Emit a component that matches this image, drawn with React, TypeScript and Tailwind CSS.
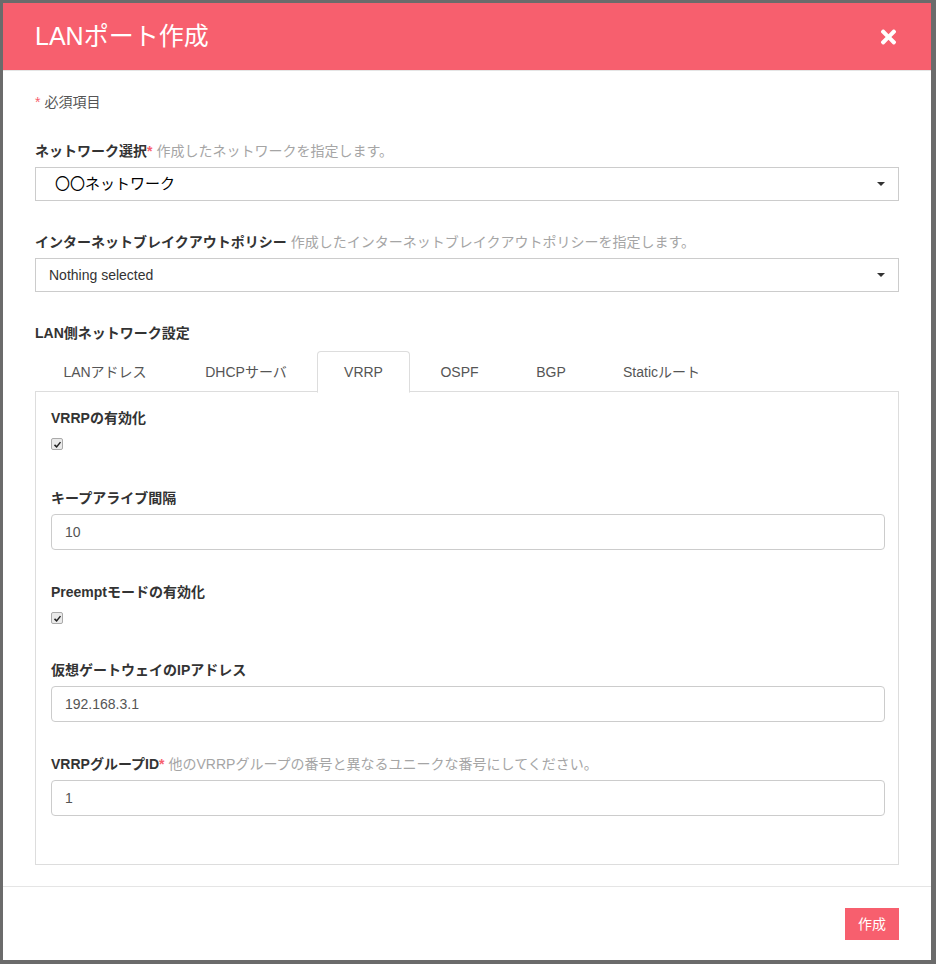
import React from 'react';
import { FaTimes } from 'react-icons/fa';

const FONT = "font-['Liberation_Sans','Noto_Sans_CJK_JP',sans-serif]";

function Caret() {
  return (
    <span className="w-0 h-0 border-l-[4px] border-r-[4px] border-t-[4px] border-l-transparent border-r-transparent border-t-[#333]" />
  );
}

function SelectBox({ value, big }: { value: string; big?: boolean }) {
  return (
    <div className="mt-1.5 h-[34px] border border-[#ccc] bg-white flex items-center justify-between pr-[13px]">
      {big ? (
        <span className="pl-[19px] text-[15px] text-black">{value}</span>
      ) : (
        <span className="pl-[13px] text-sm text-[#333]">{value}</span>
      )}
      <Caret />
    </div>
  );
}

function Label({
  text,
  required,
  hint,
  className = '',
}: {
  text: string;
  required?: boolean;
  hint?: string;
  className?: string;
}) {
  return (
    <div className={`h-5 text-sm leading-5 whitespace-nowrap ${className}`}>
      <span className="font-bold text-[#333]">{text}</span>
      {required && <span className="text-[#f75f6e] font-bold">*</span>}
      {hint && <span className="text-[#a5a5a5] ml-1">{hint}</span>}
    </div>
  );
}

function CheckBox() {
  return (
    <div className="mt-2.5 w-3 h-3 rounded-[2px] border border-[#aaa] bg-[#eaeaea] flex items-center justify-center">
      <svg viewBox="0 0 12 12" className="w-[9px] h-[9px]">
        <path d="M2 6.5 L4.8 9.2 L10 2.8" fill="none" stroke="#222" strokeWidth="2" />
      </svg>
    </div>
  );
}

function TextInput({ value }: { value: string }) {
  return (
    <div className="mt-1.5 h-9 border border-[#ccc] rounded bg-white flex items-center pl-[13px] text-sm text-[#555]">
      {value}
    </div>
  );
}

const tabs = [
  { name: 'LANアドレス', w: 'w-[140px]' },
  { name: 'DHCPサーバ', w: 'w-[138px]' },
  { name: 'VRRP', w: 'w-[93px]', active: true },
  { name: 'OSPF', w: 'w-[95px]' },
  { name: 'BGP', w: 'w-[84px]' },
  { name: 'Staticルート', w: 'w-[133px]' },
];

export default function App() {
  return (
    <div className={`min-h-[964px] bg-[#6b6b6b] p-[3px] ${FONT}`}>
      <div className="w-[928px] h-[957px] bg-white flex flex-col">
        <div className="h-[68px] bg-[#f75f6e] border-b border-[#e5e5e5] flex items-center justify-between pl-8 pr-[33px]">
          <h1 className="text-[25px] text-white">LANポート作成</h1>
          <FaTimes className="text-white w-[19px] h-[22px]" />
        </div>

        <div className="px-8 pt-[21px] pb-[21px]">
          <div className="h-5 text-sm leading-5">
            <span className="text-[#f75f6e]">*</span>
            <span className="text-[#555] ml-1">必須項目</span>
          </div>

          <Label
            className="mt-[29px]"
            text="ネットワーク選択"
            required
            hint="作成したネットワークを指定します。"
          />
          <SelectBox value="〇〇ネットワーク" big />

          <Label
            className="mt-[31px]"
            text="インターネットブレイクアウトポリシー"
            hint="作成したインターネットブレイクアウトポリシーを指定します。"
          />
          <SelectBox value="Nothing selected" />

          <Label className="mt-[31px]" text="LAN側ネットワーク設定" />

          <div className="mt-2 flex gap-[2px] h-[41px] relative z-10">
            {tabs.map((t) => (
              <div
                key={t.name}
                className={`${t.w} flex items-center justify-center text-sm text-[#555] ${
                  t.active
                    ? 'bg-white border border-[#ddd] border-b-white rounded-t h-[42px]'
                    : ''
                }`}
              >
                {t.name}
              </div>
            ))}
          </div>

          <div className="border border-[#ddd] h-[474px] -mt-px pt-4 pl-[15px] pr-[13px]">
            <Label text="VRRPの有効化" />
            <CheckBox />

            <Label className="mt-[38px]" text="キープアライブ間隔" />
            <TextInput value="10" />

            <Label className="mt-[32px]" text="Preemptモードの有効化" />
            <CheckBox />

            <Label className="mt-[36px]" text="仮想ゲートウェイのIPアドレス" />
            <TextInput value="192.168.3.1" />

            <Label
              className="mt-[32px]"
              text="VRRPグループID"
              required
              hint="他のVRRPグループの番号と異なるユニークな番号にしてください。"
            />
            <TextInput value="1" />
          </div>
        </div>

        <div className="border-t border-[#e5e5e5] flex justify-end px-8 pt-[21px]">
          <button className="w-[54px] h-8 bg-[#f75f6e] text-white text-sm">
            作成
          </button>
        </div>
      </div>
    </div>
  );
}
